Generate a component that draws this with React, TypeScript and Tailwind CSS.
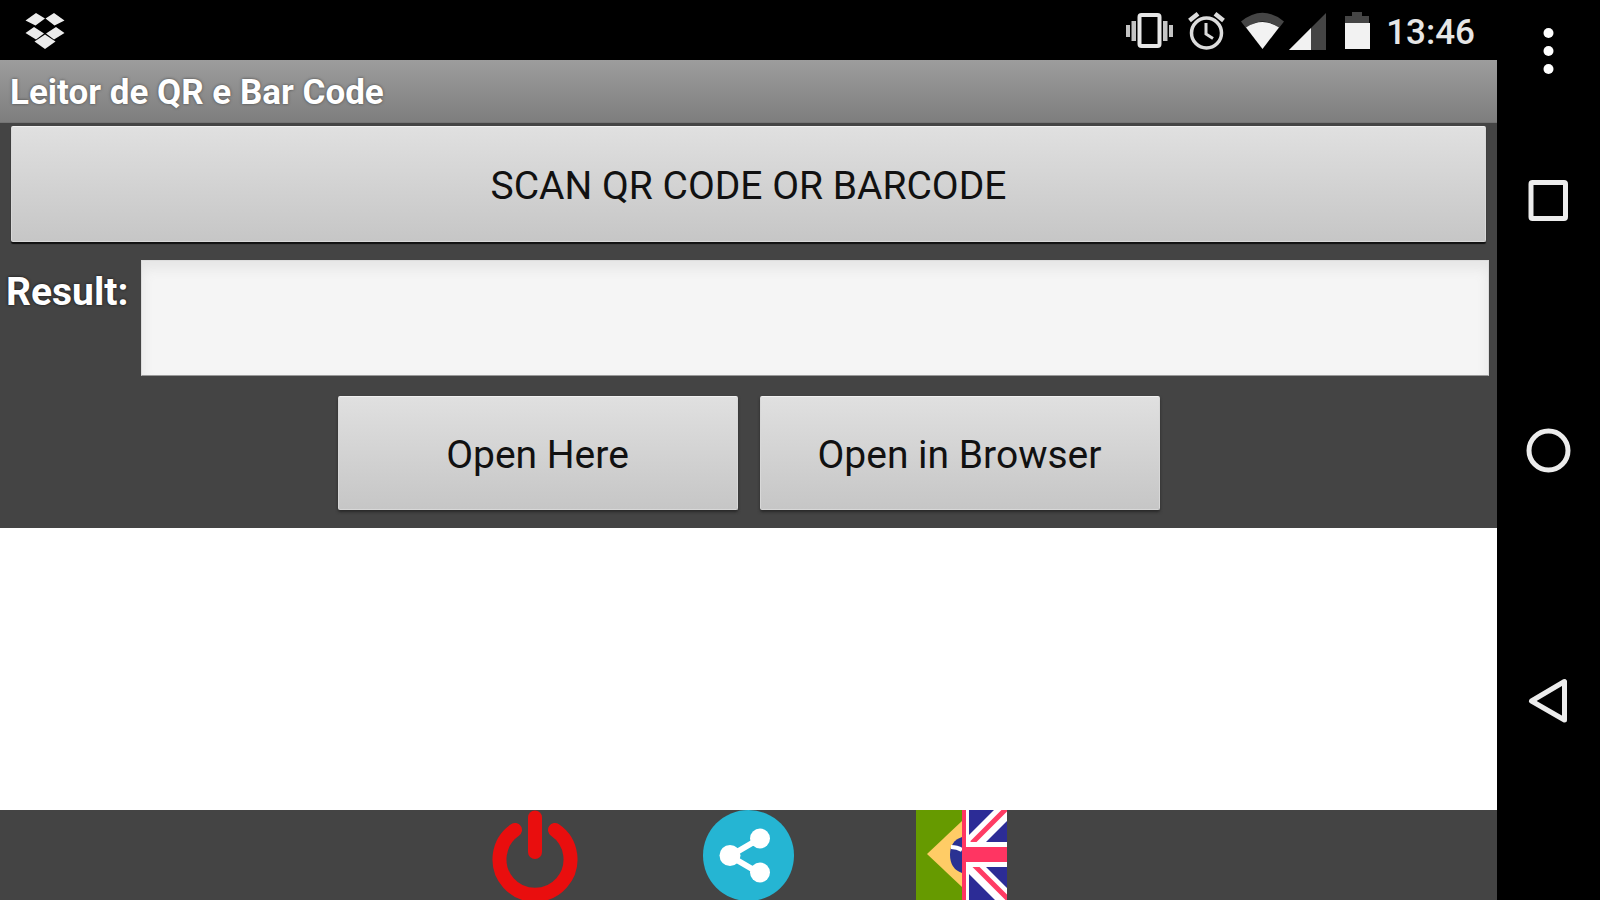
import { useState } from 'react';

const buttonStyle =
  'cursor-pointer rounded-[2px] border border-[#d8d8d8] border-t-[#f0f0f0] bg-linear-to-b from-[#e0e0e0] to-[#c6c6c6] pt-1 font-normal text-[#111]';

function StatusBar() {
  return (
    <header className="flex h-[60px] shrink-0 items-center bg-black pt-[2px] pl-[25px] pr-[22px]">
      {/* Dropbox */}
      <svg className="h-9 w-10" viewBox="0 0 40 36" fill="#ececec">
        <path d="M11 0L20 5.500L10.500 12.500L0.500 7.500ZM29 0L39.500 7.500L29.500 12.500L20.500 5.500Z" />
        <path d="M9 14L19 20.500L11 26.500L0.500 20ZM31 14L39.500 20L29 26.500L21 20.500Z" />
        <path d="M20 21.500L30.500 28.500L20 36L9.500 28.500Z" />
      </svg>

      <div className="ml-auto flex items-center">
        {/* Vibrate */}
        <svg className="mr-[15px] h-[38px] w-12" viewBox="0 0 48 38" fill="#c4c4c4">
          <rect x="14.500" y="3" width="20" height="31" rx="2" fill="none" stroke="#e6e6e6" strokeWidth="4" />
          <path d="M6.500 9h4.500v20h-4.500zM38 9h4.500v20h-4.500z" />
          <path d="M1 13h4v12H1zM44 13h4v12h-4z" />
        </svg>
        {/* Alarm */}
        <svg className="mr-4 h-[38px] w-[37px]" viewBox="0 0 37 38" fill="none" stroke="#dcdcdc" strokeWidth="3.500">
          <circle cx="18.500" cy="21" r="15" />
          <path d="M1.500 8.500L10 1.800M35.500 8.500L27 1.800" strokeWidth="4.500" />
          <path d="M18 11v11l7 4.500" strokeWidth="3" />
        </svg>
        {/* Wifi */}
        <svg className="mr-[5px] h-[38px] w-[43px]" viewBox="0 0 43 38">
          <path d="M0 9.500Q21.500 -8 43 9.500L38 16Q21.500 3 5 16Z" fill="#454545" />
          <path d="M5 15.500Q21.500 4.500 38 15.500L21.500 37Z" fill="#f2f2f2" />
        </svg>
        {/* Signal */}
        <svg className="mr-[18px] h-[38px] w-[37px]" viewBox="0 0 37 38">
          <path d="M37 1V38H0Z" fill="#454545" />
          <path d="M22 16V38H0Z" fill="#f2f2f2" />
        </svg>
        {/* Battery */}
        <svg className="mr-4 h-[38px] w-[26px]" viewBox="0 0 26 38">
          <path d="M8 0h10v4h7v7H1V4h7z" fill="#454545" />
          <path d="M1 11h25v26H1z" fill="#f2f2f2" />
        </svg>
        <time className="pt-1 text-[35px] leading-10 font-medium text-[#e6e6e6]">13:46</time>
      </div>
    </header>
  );
}

function NavigationBar() {
  const item = 'flex w-full cursor-pointer items-center justify-center';

  return (
    <nav className="flex w-[103px] shrink-0 flex-col bg-black">
      <button type="button" aria-label="Menu" className={`${item} flex-1`}>
        <svg className="h-12 w-3" viewBox="0 0 12 48" fill="#fff">
          <circle cx="5.500" cy="7" r="5" />
          <circle cx="5.500" cy="25" r="5" />
          <circle cx="5.500" cy="43" r="5" />
        </svg>
      </button>
      <button type="button" aria-label="Recent apps" className={`${item} flex-2`}>
        <svg className="size-11" viewBox="0 0 44 44" fill="none" stroke="#ececec" strokeWidth="5">
          <rect x="4" y="4.500" width="34.500" height="36" rx="1.500" />
        </svg>
      </button>
      <button type="button" aria-label="Home" className={`${item} flex-3`}>
        <svg className="size-12" viewBox="0 0 48 48" fill="none" stroke="#ececec" strokeWidth="5">
          <circle cx="23.500" cy="24.500" r="19.500" />
        </svg>
      </button>
      <button type="button" aria-label="Back" className={`${item} flex-2`}>
        <svg className="size-12" viewBox="0 0 48 48" fill="none" stroke="#ececec" strokeWidth="5" strokeLinejoin="round">
          <path d="M39.500 5.500V44L6.500 25Z" />
        </svg>
      </button>
      <div className="flex-1" />
    </nav>
  );
}

function PowerIcon() {
  return (
    <svg className="h-full w-full" viewBox="0 0 91 90" fill="none" stroke="#e90e0e" strokeLinecap="round">
      <path d="M25 20A35.500 35.500 0 1 0 65 20" strokeWidth="14" />
      <path d="M45 7.500V42" strokeWidth="14" />
    </svg>
  );
}

function ShareIcon() {
  return (
    <svg className="h-full w-full" viewBox="0 0 91 90">
      <circle cx="45.500" cy="45.500" r="45.500" fill="#25b5d3" />
      <path d="M56 29L27 46L56 63" fill="none" stroke="#fff" strokeWidth="6" />
      <g fill="#fff">
        <circle cx="57" cy="28.500" r="10" />
        <circle cx="27" cy="45.500" r="10.500" />
        <circle cx="57" cy="62.500" r="10" />
      </g>
    </svg>
  );
}

function FlagIcon() {
  return (
    <svg className="h-full w-full" viewBox="0 0 91 90">
      <path d="M0 0h46v90H0z" fill="#669a00" />
      <path d="M46 11V77L11 44Z" fill="#fc6" />
      <path d="M46 27Q34 31 34 44.500Q34 59 46 63Z" fill="#2a3192" />
      <path d="M35 37Q41 37 46 40" fill="none" stroke="#fff" strokeWidth="4" />
      <path d="M46 0h45v90H46z" fill="#2c2c96" />
      <path d="M52 38L91 -1M52 51L91 90" stroke="#fff" strokeWidth="17" />
      <path d="M56 33L91 -2M58 55L94 91" stroke="#ff3c64" strokeWidth="5" />
      <path d="M46 0h7v90h-7zM46 32h45v25H46z" fill="#fff" />
      <path d="M46 0h4v90h-4zM46 37h45v15H46z" fill="#ff3562" />
    </svg>
  );
}

export default function App() {
  const [result, setResult] = useState('');

  return (
    <div className="flex min-h-screen bg-black font-[Roboto,sans-serif]">
      <div className="flex min-w-0 flex-1 flex-col">
        <StatusBar />

        <div className="flex h-[63px] shrink-0 items-center border-b border-[#747474] bg-linear-to-b from-[#9d9d9d] to-[#7e7e7e] px-[10px] pt-1">
          <h1 className="text-[35px] leading-10 font-bold text-white text-shadow-[0_0_3px_#444]">Leitor de QR e Bar Code</h1>
        </div>

        <main className="flex flex-1 flex-col bg-[#444]">
          <div className="px-[11px] pt-[3px]">
            <button type="button" className={`${buttonStyle} h-[116px] w-full text-[39px] shadow-[0_2px_1px_#111]`}>
              SCAN QR CODE OR BARCODE
            </button>
          </div>

          <div className="flex items-start pl-[6px] pr-2 pt-[18px]">
            <label htmlFor="result" className="w-[135px] pt-2 text-[39px] leading-12 font-bold text-white text-shadow-[0_0_3px_#111]">
              Result:
            </label>
            <input
              id="result"
              type="text"
              value={result}
              onChange={(e) => setResult(e.target.value)}
              className="h-[116px] min-w-0 flex-1 border border-[#ddd] border-b-[#999] bg-[#f5f5f5] px-4 text-[39px] text-black shadow-[inset_0_8px_12px_#e6e6e6] outline-none"
            />
          </div>

          <div className="flex justify-center gap-[22px] pt-5 pb-[18px]">
            <button type="button" className={`${buttonStyle} h-[114px] w-[400px] text-[39px] shadow-[0_2px_3px_#282828]`}>
              Open Here
            </button>
            <button type="button" className={`${buttonStyle} h-[114px] w-[400px] text-[39px] shadow-[0_2px_3px_#282828]`}>
              Open in Browser
            </button>
          </div>

          {/* Page view */}
          <section aria-label="Page" className="flex-1 bg-white" />

          <footer className="flex h-[90px] shrink-0 justify-center gap-[122px]">
            <button type="button" aria-label="Exit" className="w-[91px] cursor-pointer">
              <PowerIcon />
            </button>
            <button type="button" aria-label="Share" className="w-[91px] cursor-pointer">
              <ShareIcon />
            </button>
            <button type="button" aria-label="Language" className="w-[91px] cursor-pointer">
              <FlagIcon />
            </button>
          </footer>
        </main>
      </div>

      <NavigationBar />
    </div>
  );
}
